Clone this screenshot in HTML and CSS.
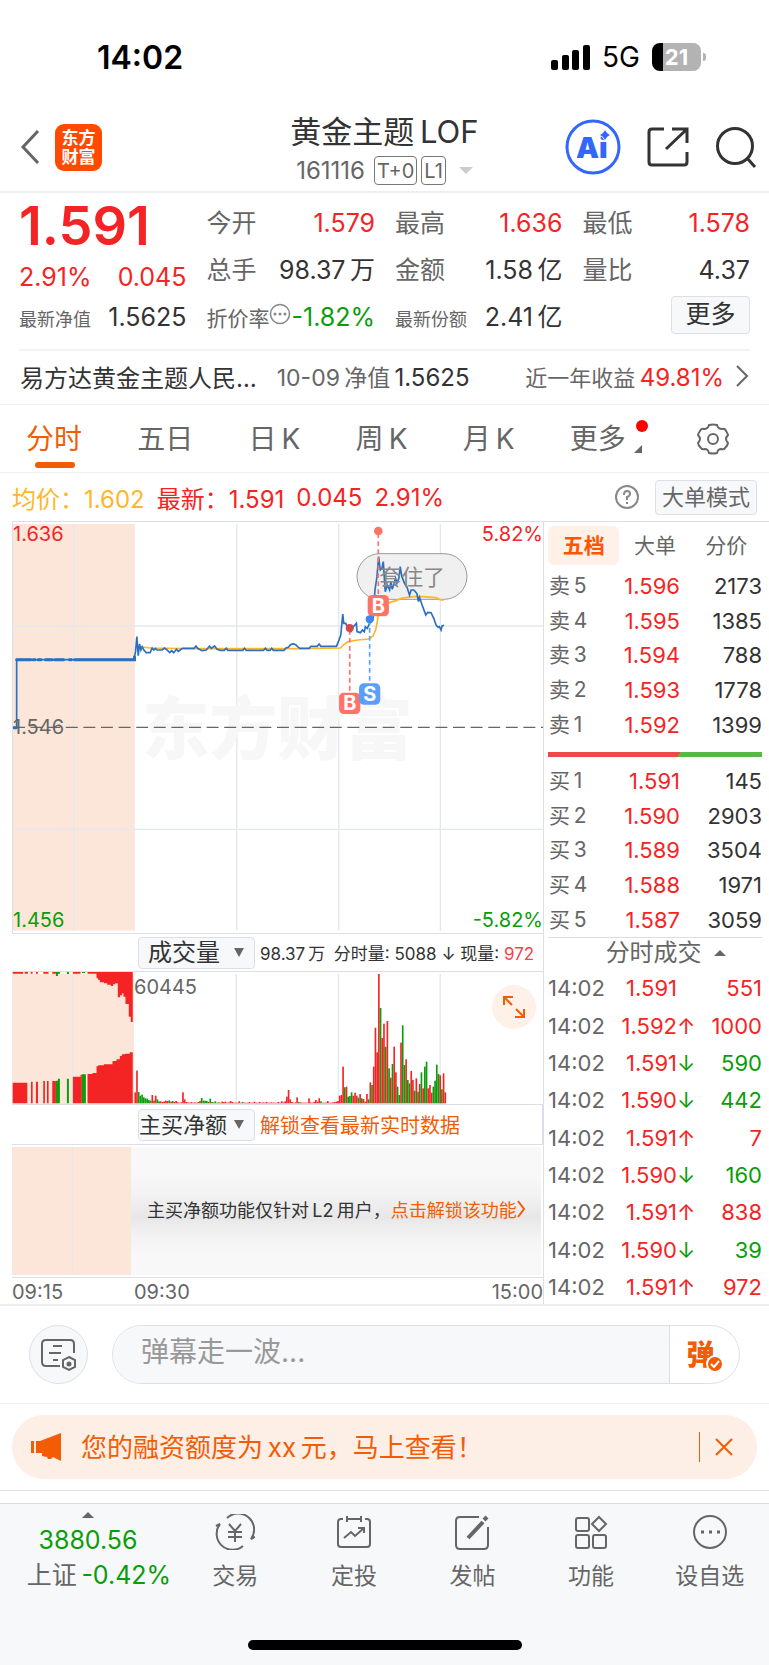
FILE: index.html
```
<!DOCTYPE html>
<html lang="zh-CN">
<head>
    <meta charset="UTF-8">
    <meta name="viewport" content="width=device-width, initial-scale=1">
    <title>黄金主题LOF 161116</title>
    <link rel="stylesheet" href="styles.css">
</head>
<body>
    <div class="status-bar">
        <span class="clock">14:02</span>
        <div class="status-right">
            <svg width="39" height="25" viewBox="0 0 39 25">
                <rect x="0" y="15" width="7" height="10" rx="2"/>
                <rect x="11" y="10" width="7" height="15" rx="2"/>
                <rect x="21" y="5" width="7" height="20" rx="2"/>
                <rect x="32" y="0" width="7" height="25" rx="2"/>
            </svg>
            <span class="network">5G</span>
            <span class="battery">21</span>
        </div>
    </div>

    <header class="header">
        <div class="header-left">
            <button class="icon-btn" aria-label="返回">
                <svg width="20" height="36" viewBox="0 0 20 36" fill="none" stroke="#666" stroke-width="3">
                    <path d="M18 2 L3 18 L18 34"/>
                </svg>
            </button>
            <a class="logo" href="#">东方<br>财富</a>
        </div>
        <div class="title">
            <h1>黄金主题&thinsp;LOF</h1>
            <div class="subtitle">
                <span>161116</span>
                <span class="tags"><span class="tag">T+0</span><span class="tag">L1</span></span>
                <span class="caret-down"></span>
            </div>
        </div>
        <div class="header-right">
            <button class="icon-btn" aria-label="AI">
                <svg width="56" height="56" viewBox="0 0 56 56">
                    <circle cx="28" cy="28" r="26" fill="#fff" stroke="#3366ff" stroke-width="3"/>
                    <text class="ai-text" x="11" y="39">Ai</text>
                    <path d="M40 9 Q41 15 47 16 Q41 17 40 23 Q39 17 33 16 Q39 15 40 9z" fill="#3366ff" stroke="#fff" stroke-width="1"/>
                </svg>
            </button>
            <button class="icon-btn" aria-label="分享">
                <svg width="42" height="42" viewBox="0 0 42 42" fill="none" stroke="#333" stroke-width="3">
                    <path d="M17 3 H5 Q2 3 2 6 V36 Q2 39 5 39 H37 Q40 39 40 36 V26"/>
                    <path d="M25 3 H40 V17 M40 3 L19 23"/>
                </svg>
            </button>
            <button class="icon-btn" aria-label="搜索">
                <svg width="42" height="42" viewBox="0 0 42 42" fill="none" stroke="#333" stroke-width="3">
                    <circle cx="20" cy="20" r="17.500"/>
                    <path d="M32 32 L40 41"/>
                </svg>
            </button>
        </div>
    </header>

    <section class="quote">
        <div class="quote-col">
            <div class="price">1.591</div>
            <div class="quote-row change red"><span>2.91%</span><span>0.045</span></div>
            <div class="quote-row"><span class="label small">最新净值</span><span>1.5625</span></div>
        </div>
        <div class="quote-col">
            <div class="quote-row"><span class="label">今开</span><span class="red">1.579</span></div>
            <div class="quote-row"><span class="label">总手</span><span>98.37&thinsp;万</span></div>
            <div class="quote-row"><span class="label medium">折价率<svg class="more-dot" width="22" height="22" viewBox="0 0 22 22" fill="#888"><circle cx="11" cy="11" r="9.500" fill="none" stroke="#888" stroke-width="1.500"/><circle cx="6" cy="11" r="1.500"/><circle cx="11" cy="11" r="1.500"/><circle cx="16" cy="11" r="1.500"/></svg></span><span class="green">-1.82%</span></div>
        </div>
        <div class="quote-col">
            <div class="quote-row"><span class="label">最高</span><span class="red">1.636</span></div>
            <div class="quote-row"><span class="label">金额</span><span>1.58&thinsp;亿</span></div>
            <div class="quote-row"><span class="label small">最新份额</span><span>2.41&thinsp;亿</span></div>
        </div>
        <div class="quote-col">
            <div class="quote-row"><span class="label">最低</span><span class="red">1.578</span></div>
            <div class="quote-row"><span class="label">量比</span><span>4.37</span></div>
            <div class="quote-row end"><button class="more-btn">更多</button></div>
        </div>
    </section>

    <a class="fund" href="#">
        <span class="fund-name">易方达黄金主题人民…</span>
        <span class="fund-nav"><span class="label">10-09&thinsp;净值</span>&thinsp;1.5625</span>
        <span class="fund-year"><span class="label">近一年收益</span>&thinsp;<span class="red">49.81%</span></span>
        <svg width="13" height="22" viewBox="0 0 13 22" fill="none" stroke="#666" stroke-width="2"><path d="M1 1 L11 11 L1 21"/></svg>
    </a>

    <nav class="tabs">
        <button class="tab active">分时</button>
        <button class="tab">五日</button>
        <button class="tab">日&thinsp;K</button>
        <button class="tab">周&thinsp;K</button>
        <button class="tab">月&thinsp;K</button>
        <button class="tab has-more">更多</button>
        <button class="tab settings" aria-label="设置">
            <svg width="32" height="32" viewBox="0 0 32 32" fill="none" stroke="#666" stroke-width="2">
                <path d="M12 2 Q16 1 20 2 Q21 6 25 6 Q28 5 29 8 Q31 11 31 12 Q27 16 31 20 Q31 22 28 25 Q27 27 24 26 Q21 26 20 30 Q16 31 12 30 Q11 26 8 26 Q5 27 4 25 Q1 22 1 20 Q5 16 1 12 Q1 11 3 8 Q4 5 7 6 Q11 6 12 2z"/>
                <circle cx="16" cy="16" r="5"/>
            </svg>
        </button>
    </nav>

    <div class="summary">
        <span class="yellow">均价：1.602</span>
        <span class="red">最新：1.591</span>
        <span class="red">0.045</span>
        <span class="red">2.91%</span>
        <div class="summary-right">
            <button class="icon-btn" aria-label="帮助">
                <svg width="26" height="26" viewBox="0 0 26 26" fill="none" stroke="#888" stroke-width="2">
                    <circle cx="13" cy="13" r="11"/>
                    <path d="M10 11 Q10 7 13 7 Q16 7 16 10 Q16 12 13 13 V16 M13 18 V20"/>
                </svg>
            </button>
            <button class="mode-btn">大单模式</button>
        </div>
    </div>

    <main class="board">
        <div class="charts">
            <div class="chart price-chart">
                <!-- 3 units per pixel -->
                <svg viewBox="36 36 1596 1233" preserveAspectRatio="none">
                    <rect x="36" y="42" width="367" height="1220" fill="#fce6da"/>
                    <path class="grid-line" d="M219 42V1262 M710 42V1262 M1017 42V1262 M1323 42V1262 M36 348H1632 M36 958H1632"/>
                    <text class="watermark" x="424" y="732">东方财富</text>
                    <rect class="bubble" x="1072" y="131" width="331" height="137" rx="69"/>
                    <path d="M36 652H1632" stroke="#666" stroke-width="4" stroke-dasharray="36 17"/>
                    <path class="line avg" d="M415 410 L450 414 L540 416 H900 L1023 414 L1030 405 L1045 395 L1075 390 L1108 387 L1120 378 L1128 360 L1132 340 L1136 315 L1145 290 L1160 280 L1190 272 L1205 265 L1240 260 L1270 260 L1310 263 L1324 270 H1334"/>
                    <path class="line auction" d="M47 449H90 M97 449H102 M112 449H120 M134 449H154 M162 449H188 M206 449H212 M222 449H402 V440 M38 653H46"/>
                    <path class="line" d="M47 655 V449 H400 L405 425 L409 380 L413 437 L417 402 L421 420 L425 410 L430 420 L437 428 H449 L455 414 L460 420 L465 415 L470 420 H485 L492 414 L500 420 L508 428 L514 422 L520 428 L528 418 L534 424 L546 415 H581 L587 408 L592 415 L605 422 L618 420 L628 408 L633 415 L643 408 L650 417 L660 421 H672 L678 415 L683 421 H728 L733 415 L738 421 H790 L796 415 L801 421 H810 L815 415 L820 421 H852 L858 414 L865 412 L872 404 L880 401 L888 405 L893 410 L900 415 H928 L933 409 H952 L958 402 L963 409 H1010 L1017 392 L1023 375 L1029 312 L1032 340 L1038 340 L1045 355 L1053 365 L1060 352 L1070 340 L1072 365 L1082 368 L1088 360 L1094 365 L1097 350 L1103 355 L1110 340 L1120 330 L1126 240 L1132 200 L1137 140 L1142 180 L1147 175 L1151 155 L1157 245 L1163 225 L1170 240 L1174 215 L1178 238 L1183 222 L1188 205 L1192 220 L1198 205 L1202 170 L1207 200 L1215 220 L1222 230 L1230 255 L1235 240 H1243 L1252 250 L1257 275 L1260 262 L1268 285 L1279 315 L1285 307 L1295 308 L1303 325 L1310 345 L1316 352 L1320 350 L1325 360 L1328 348 L1334 346"/>
                    <g class="buy">
                        <path d="M1136 70V260 M1050 360V550"/>
                        <circle cx="1136" cy="63" r="13"/>
                        <circle class="dark" cx="1050" cy="354" r="12"/>
                        <rect x="1104" y="255" width="64" height="64" rx="14"/>
                        <rect x="1018" y="548" width="64" height="64" rx="14"/>
                        <text x="1136" y="308">B</text>
                        <text x="1050" y="601">B</text>
                    </g>
                    <g class="sell">
                        <path d="M1110 330V520"/>
                        <circle cx="1110" cy="328" r="12"/>
                        <rect x="1078" y="520" width="64" height="64" rx="14"/>
                        <text x="1110" y="573">S</text>
                    </g>
                    <text class="bubble-text" x="1238" y="225">套住了</text>
                </svg>
                <span class="axis top red">1.636</span>
                <span class="axis top right red">5.82%</span>
                <span class="axis middle">1.546</span>
                <span class="axis low green">1.456</span>
                <span class="axis low right green">-5.82%</span>
            </div>

            <div class="indicator">
                <span class="select"><select aria-label="指标"><option>成交量</option></select></span>
                <span class="indicator-text">98.37&thinsp;万&ensp;分时量: 5088 ↓ 现量: <span class="bright">972</span></span>
            </div>
            <div class="chart volume-chart">
                <svg id="volume" viewBox="36 126 1596 396" preserveAspectRatio="none">
                    <rect x="36" y="132" width="367" height="390" fill="#fce6da"/>
                    <path class="grid-line" d="M219 132V522 M710 132V522 M1017 132V522 M1323 132V522"/>
                    <path fill="#f52424" d="M38 126H70V131H38z M74 126H84V131H74z M92 126H98V131H92z M108 126H114V131H108z M130 126H146V131H130z M157 126H168V131H157z M219 126H242V131H219z M263 126H290V131H263z M290 126V145H295V150H300V157H312V160H322V164H333V168H340V163H346V160H354V202H361V196H367V190H371V200H377V222H387V260H393V276H399V126z"/>
                    <path fill="#f52424" d="M38 520V458H82V520z M93 520V455H98V520z M108 520V455H114V520z M130 520V453H135V520z M141 520V453H146V520z M157 520V453H168V520z M219 520V440H242V434H246V520z M263 520V432H278V429H290V409H295V406H312V403H338V393H350V388H360V378H366V373H376V371H390V367H399V520z"/>
                    <path fill="#0a9d0a" d="M168 520V452H174V446H180V520z M201 520V446H207V520z M246 520V433H258V520z M168 126H180V131H174V138H168z M201 126H207V132H201z M246 126H256V129H246z"/>
                </svg>
                <span class="axis volume-max">60445</span>
                <button class="expand" aria-label="全屏">
                    <svg width="24" height="24" viewBox="0 0 24 24" fill="none" stroke="#f25c05" stroke-width="2">
                        <path d="M2 10V2H11 M3 3L10 10 M22 14V22H13 M21 21L14 14"/>
                    </svg>
                </button>
            </div>

            <div class="indicator boxed">
                <span class="select wide"><select aria-label="资金指标"><option>主买净额</option></select></span>
                <a class="unlock" href="#">解锁查看最新实时数据</a>
            </div>
            <div class="chart locked">
                <div class="auction-area"></div>
                <div class="locked-msg">主买净额功能仅针对&thinsp;L2&thinsp;用户，<a href="#">点击解锁该功能<svg width="9" height="18" viewBox="0 0 9 18" fill="none" stroke="#f25c05" stroke-width="2"><path d="M1 1 L7 9 L1 17"/></svg></a></div>
            </div>
            <div class="times">
                <span class="first">09:15</span>
                <span>09:30</span>
                <span class="last">15:00</span>
            </div>
        </div>

        <aside class="side">
            <div class="side-tabs">
                <button class="active">五档</button>
                <button>大单</button>
                <button>分价</button>
            </div>
            <table class="levels">
                <tr><th>卖&thinsp;5</th><td class="red">1.596</td><td>2173</td></tr>
                <tr><th>卖&thinsp;4</th><td class="red">1.595</td><td>1385</td></tr>
                <tr><th>卖&thinsp;3</th><td class="red">1.594</td><td>788</td></tr>
                <tr><th>卖&thinsp;2</th><td class="red">1.593</td><td>1778</td></tr>
                <tr><th>卖&thinsp;1</th><td class="red">1.592</td><td>1399</td></tr>
            </table>
            <div class="ratio"></div>
            <table class="levels">
                <tr><th>买&thinsp;1</th><td class="red">1.591</td><td>145</td></tr>
                <tr><th>买&thinsp;2</th><td class="red">1.590</td><td>2903</td></tr>
                <tr><th>买&thinsp;3</th><td class="red">1.589</td><td>3504</td></tr>
                <tr><th>买&thinsp;4</th><td class="red">1.588</td><td>1971</td></tr>
                <tr><th>买&thinsp;5</th><td class="red">1.587</td><td>3059</td></tr>
            </table>
            <button class="deals-title">分时成交 <span class="caret-up"></span></button>
            <table class="deals">
                <tr><th>14:02</th><td>1.591</td><td class="arrow"></td><td class="red">551</td></tr>
                <tr><th>14:02</th><td>1.592</td><td class="arrow red">↑</td><td class="red">1000</td></tr>
                <tr><th>14:02</th><td>1.591</td><td class="arrow green">↓</td><td class="green">590</td></tr>
                <tr><th>14:02</th><td>1.590</td><td class="arrow green">↓</td><td class="green">442</td></tr>
                <tr><th>14:02</th><td>1.591</td><td class="arrow red">↑</td><td class="red">7</td></tr>
                <tr><th>14:02</th><td>1.590</td><td class="arrow green">↓</td><td class="green">160</td></tr>
                <tr><th>14:02</th><td>1.591</td><td class="arrow red">↑</td><td class="red">838</td></tr>
                <tr><th>14:02</th><td>1.590</td><td class="arrow green">↓</td><td class="green">39</td></tr>
                <tr><th>14:02</th><td>1.591</td><td class="arrow red">↑</td><td class="red">972</td></tr>
            </table>
        </aside>
    </main>

    <form class="comment">
        <button type="button" class="comment-set" aria-label="弹幕设置">
            <svg width="36" height="34" viewBox="0 0 36 34" fill="none" stroke="#666" stroke-width="2">
                <path d="M33 15V6Q33 2 29 2H5Q1 2 1 6V24Q1 28 5 28H19 M12 8H21 M8 15H20 M12 22H17"/>
                <path d="M28 19L34 22V29L28 32L22 29V22z"/>
                <circle cx="28" cy="26" r="1.500" fill="#666"/>
            </svg>
        </button>
        <div class="comment-box">
            <input type="text" aria-label="弹幕" placeholder="弹幕走一波...">
            <button type="button" class="danmu" aria-label="弹幕开关">弹<svg width="18" height="18" viewBox="0 0 18 18"><circle cx="9" cy="9" r="8" fill="#f25c05" stroke="#fff" stroke-width="2"/><path d="M5 9L8 12L13 6" fill="none" stroke="#fff" stroke-width="2"/></svg></button>
        </div>
    </form>

    <div class="banner-wrap">
        <div class="banner">
            <svg width="30" height="28" viewBox="0 0 30 28" fill="#f25c05">
                <path d="M0 8H3V20H0z M5 8H9L30 0V28L22 24L20 26H17L16 24L11 23V20H5z"/>
            </svg>
            <span class="banner-text">您的融资额度为&thinsp;xx&thinsp;元，马上查看！</span>
            <button class="banner-close" aria-label="关闭">
                <svg width="18" height="18" viewBox="0 0 18 18" stroke="#f25c05" stroke-width="2"><path d="M1 1L17 17 M17 1L1 17"/></svg>
            </button>
        </div>
    </div>

    <footer class="footer">
        <div class="bottom-nav">
            <a class="index" href="#">
                <span class="caret-up"></span>
                <span class="green">3880.56</span>
                <span class="index-name">上证&thinsp;<span class="green">-0.42%</span></span>
            </a>
            <a class="nav-item" href="#">
                <svg width="40" height="36" viewBox="0 0 40 36">
                    <path d="M12 4A16 16 0 0 1 36 25L40 23 M28 32A16 16 0 0 1 5 10L1 12"/>
                    <path d="M14 10L20 17L26 10 M20 17V28 M13 18H27 M13 23H27"/>
                </svg>
                交易
            </a>
            <a class="nav-item" href="#">
                <svg width="34" height="36" viewBox="0 0 34 36">
                    <path d="M6 5H4Q1 5 1 8V30Q1 33 4 33H30Q33 33 33 30V8Q33 5 30 5H28 M10 2V8 M24 2V8 M10 5H24"/>
                    <path d="M7 24L14 18L18 22L27 14 M21 14H27V19"/>
                </svg>
                定投
            </a>
            <a class="nav-item" href="#">
                <svg width="34" height="36" viewBox="0 0 34 36">
                    <path d="M24 3H5Q1 3 1 7V31Q1 35 5 35H29Q33 35 33 31V13"/>
                    <path d="M13 24L28 8" stroke-width="4"/><path d="M29 6L32 3" stroke-width="4"/>
                </svg>
                发帖
            </a>
            <a class="nav-item" href="#">
                <svg width="34" height="36" viewBox="0 0 34 36">
                    <rect x="2" y="4" width="13" height="13" rx="2"/>
                    <rect x="2" y="21" width="13" height="13" rx="2"/>
                    <rect x="19" y="21" width="13" height="13" rx="2"/>
                    <path d="M25 3L32 10L25 17L18 10z"/>
                </svg>
                功能
            </a>
            <a class="nav-item" href="#">
                <svg width="34" height="36" viewBox="0 0 34 36">
                    <circle cx="17" cy="18" r="16"/>
                    <path d="M8 18H11 M16 18H19 M24 18H27" stroke-width="3"/>
                </svg>
                设自选
            </a>
        </div>
        <div class="home-bar"></div>
    </footer>
    <script src="script.js"></script>
</body>
</html>
```
FILE: styles.css
```
* { box-sizing: border-box; }
body {
    margin: 0;
    background: #fff;
    color: #333;
    font-family: Inter, "Noto Sans CJK SC", sans-serif;
    font-size: 25px;
}
button, input, select {
    font: inherit;
    color: inherit;
    background: none;
    border: none;
    margin: 0;
    padding: 0;
}
button { cursor: pointer; }
a { color: inherit; text-decoration: none; }
svg { display: block; }

.red { color: #f52424; }
.green { color: #0a9d0a; }
.yellow { color: #fcb72b; }
.label { color: #666; }

/* status bar */
.status-bar {
    display: flex;
    justify-content: space-between;
    align-items: center;
    height: 114px;
    padding: 0 68px 0 97px;
    color: #000;
}
.clock { font-size: 32px; font-weight: 600; }
.status-right { display: flex; align-items: center; gap: 12px; }
.network { font-size: 28px; }
.battery {
    position: relative;
    width: 49px;
    height: 28px;
    border-radius: 8px;
    background: linear-gradient(90deg, #000 11px, #b3b3b3 11px);
    color: #fff;
    font-size: 22px;
    font-weight: 700;
    line-height: 28px;
    text-align: center;
}
.battery::after {
    content: "";
    position: absolute;
    left: 51px;
    top: 10px;
    width: 3px;
    height: 8px;
    border-radius: 0 3px 3px 0;
    background: #b3b3b3;
}

/* header */
.header {
    display: grid;
    grid-template-columns: 1fr auto 1fr;
    align-items: center;
    height: 79px;
    padding: 0 12px 2px 20px;
    border-bottom: 2px solid #eee;
}
.header-left { display: flex; align-items: center; gap: 15px; padding-bottom: 10px; }
.logo {
    width: 47px;
    height: 47px;
    padding-top: 5px;
    border-radius: 9px;
    background: #ff4a00;
    color: #fff;
    font-size: 17px;
    font-weight: 700;
    line-height: 19px;
    text-align: center;
}
.title { padding-right: 8px; text-align: center; }
.title h1 { margin: 0; font-size: 31px; font-weight: 400; line-height: 36px; }
.subtitle {
    display: flex;
    align-items: center;
    justify-content: center;
    gap: 9px;
    height: 40px;
    color: #666;
    font-size: 24px;
}
.tags { display: flex; gap: 4px; }
.tag {
    height: 29px;
    padding: 0 2px;
    border: 1px solid #777;
    border-radius: 4px;
    font-size: 20px;
    line-height: 28px;
}
.caret-down {
    margin-left: 4px;
    border: 7px solid transparent;
    border-top-color: #ccc;
    border-bottom: none;
}
.caret-up {
    display: inline-block;
    border: 6px solid transparent;
    border-bottom-color: #666;
    border-top: none;
}
.header-right {
    display: flex;
    align-items: center;
    justify-content: flex-end;
    gap: 26px;
    padding-bottom: 10px;
}
.ai-text { font-size: 29px; font-weight: 900; fill: #3366ff; }

/* quote */
.quote {
    display: grid;
    grid-template-columns: repeat(4, 1fr);
    gap: 20px;
    margin: 0 19px;
    padding: 7px 0 8px;
    border-bottom: 2px solid #f3f3f3;
}
.quote-row {
    display: flex;
    justify-content: space-between;
    align-items: baseline;
    height: 47px;
    line-height: 47px;
    white-space: nowrap;
}
.quote-row.change { height: 39px; line-height: 45px; }
.quote-row.end { justify-content: flex-end; align-items: flex-start; padding-top: 2px; }
.quote .label { font-size: 25px; }
.quote .label.medium { display: flex; font-size: 21px; }
.quote .label.small { font-size: 18px; }
.more-dot { margin-top: 8px; }
.price {
    height: 55px;
    color: #f52424;
    font-size: 54px;
    font-weight: 600;
    line-height: 51px;
}
.more-btn {
    width: 79px;
    height: 38px;
    padding-bottom: 2px;
    border: 1px solid #dcdfe6;
    border-radius: 4px;
    background: #f7f8fa;
    font-size: 25px;
    line-height: 32px;
}

/* fund */
.fund {
    display: flex;
    align-items: center;
    height: 54px;
    padding: 0 20px 3px;
    border-bottom: 1px solid #eee;
    font-size: 24px;
    white-space: nowrap;
}
.fund .label { font-size: 22px; }
.fund-nav { margin-left: 20px; }
.fund-nav .label { font-size: 23px; }
.fund-year { margin-left: auto; margin-right: 12px; }

/* period tabs */
.tabs {
    display: flex;
    justify-content: space-between;
    align-items: center;
    height: 68px;
    padding: 0 40px 0 26px;
    border-bottom: 1px solid #eee;
    font-size: 28px;
    color: #666;
}
.tab { position: relative; height: 66px; padding-bottom: 4px; }
.tab.settings { padding-bottom: 0; }
.tab.active { color: #f25c05; }
.tab.active::after {
    content: "";
    position: absolute;
    left: 9px;
    bottom: 4px;
    width: 40px;
    height: 6px;
    border-radius: 3px;
    background: #f25c05;
}
.tab.has-more { margin-right: 16px; }
.has-more::before {
    content: "";
    position: absolute;
    right: -22px;
    top: 14px;
    width: 12px;
    height: 12px;
    border-radius: 50%;
    background: #f00;
}
.has-more::after {
    content: "";
    position: absolute;
    right: -16px;
    bottom: 19px;
    border-bottom: 8px solid #666;
    border-left: 8px solid transparent;
}

/* summary line */
.summary {
    display: flex;
    align-items: center;
    gap: 12px;
    height: 48px;
    padding: 0 12px;
    font-size: 24px;
    white-space: nowrap;
}
.summary-right { display: flex; align-items: center; gap: 15px; margin-left: auto; }
.mode-btn {
    width: 102px;
    height: 35px;
    border: 1px solid #dcdfe6;
    border-radius: 4px;
    background: #f7f8fa;
    color: #666;
    font-size: 22px;
    line-height: 30px;
}

/* charts */
.board { display: flex; border-bottom: 2px solid #eee; }
.charts { flex: 1; min-width: 0; padding-left: 12px; border-right: 1px solid #dcdfe6; }
.chart { position: relative; }
.chart > svg { width: 100%; height: 100%; }
.price-chart {
    height: 413px;
    border: 1px solid #dcdfe6;
    border-right: none;
}
.grid-line { fill: none; stroke: #e3e7ee; stroke-width: 4; }
.watermark { font-size: 204px; font-weight: 900; fill: #f7f7f7; }
.line { fill: none; stroke: #2b70c0; stroke-width: 5; }
.line.avg { stroke: #fcb72b; }
.line.auction { stroke-width: 9; stroke-linecap: round; }
.buy path { stroke: #ff7366; stroke-width: 5; stroke-dasharray: 14 10; }
.buy rect, .buy circle { fill: #ff7366; }
.buy .dark { fill: #d9444c; }
.sell path { stroke: #5a9fff; stroke-width: 5; stroke-dasharray: 14 10; }
.sell rect { fill: #5a9fff; }
.sell circle { fill: #3d86f5; }
.buy text, .sell text { fill: #fff; font-size: 60px; font-weight: 700; text-anchor: middle; }
.bubble { fill: #f0f0f0; stroke: #999; stroke-width: 3; }
.bubble-text { fill: #888; font-size: 66px; text-anchor: middle; }
.axis {
    position: absolute;
    left: 0;
    color: #666;
    font-size: 20px;
    line-height: 24px;
}
.axis.red { color: #f52424; }
.axis.green { color: #0a9d0a; }
.axis.right { left: auto; right: 0; }
.axis.top { top: 0; }
.axis.middle { top: 193px; }
.axis.low { bottom: 1px; }

.indicator {
    display: flex;
    align-items: center;
    gap: 5px;
    height: 37px;
    padding-left: 126px;
    white-space: nowrap;
}
.indicator.boxed {
    height: 40px;
    border-top: 1px solid #dcdfe6;
    border-right: 1px solid #dcdfe6;
}
.select { position: relative; flex: none; width: 117px; height: 32px; }
.select select {
    appearance: none;
    width: 117px;
    height: 32px;
    padding-left: 9px;
    border: 1px solid #dcdfe6;
    border-radius: 4px;
    background: #f7f8fa;
    font-size: 24px;
}
.select.wide select { padding-left: 0; font-size: 22px; }
.select::after {
    content: "";
    position: absolute;
    right: 11px;
    top: 11px;
    border: 5px solid transparent;
    border-top: 9px solid #666;
    border-bottom: none;
}
.indicator-text { font-size: 17px; }
.bright { color: #f54545; }
.volume-chart { height: 133px; border-top: 1px solid #dcdfe6; }
.axis.volume-max { left: 122px; top: 3px; }
.expand {
    position: absolute;
    right: 7px;
    top: 13px;
    display: flex;
    align-items: center;
    justify-content: center;
    width: 44px;
    height: 44px;
    border-radius: 50%;
    background: #fff0e8;
}
.unlock { color: #f25c05; font-size: 20px; }
.locked {
    display: flex;
    height: 134px;
    padding: 2px 2px 2px 0;
    border-top: 1px solid #dcdfe6;
    border-bottom: 1px solid #dcdfe6;
}
.auction-area {
    width: 119px;
    background: linear-gradient(90deg, #fce6da 60px, #e3e7ee 60px, #e3e7ee 61px, #fce6da 61px);
}
.locked-msg {
    flex: 1;
    display: flex;
    align-items: center;
    padding: 0 0 4px 16px;
    background: linear-gradient(#f8f8f8 20%, #f2f2f2 38%, #e7e7e7 55%, #f3f3f3 70%, #f8f8f8 85%);
    font-size: 18px;
    white-space: nowrap;
}
.locked-msg a { display: flex; align-items: center; color: #f25c05; }
.times { display: flex; height: 26px; color: #666; font-size: 20px; line-height: 28px; }
.times .first { width: 122px; }
.times .last { margin-left: auto; }

/* order book */
.side { width: 225px; padding: 0 7px 0 4px; border-top: 1px solid #dcdfe6; }
.side-tabs { display: flex; padding-top: 4px; font-size: 21px; color: #666; }
.side-tabs button { flex: 1; height: 39px; padding-bottom: 4px; }
.side-tabs .active {
    border-radius: 6px;
    background: #fff0e8;
    color: #ff5500;
    font-weight: 700;
}
table { width: 100%; border-collapse: collapse; font-size: 22px; }
th, td { padding: 0; text-align: right; line-height: 30px; }
th { color: #666; font-weight: 400; text-align: left; }
.levels { height: 173px; margin-top: 4px; }
.levels th { padding-left: 1px; width: 60px; font-size: 21px; }
.levels td { width: 72px; }
.levels td:last-child { width: auto; }
.ratio {
    height: 5px;
    margin: 10px 0 7px;
    background: linear-gradient(120deg, #f04848 61%, #57b944 61%);
}
.deals-title {
    display: block;
    width: 100%;
    height: 29px;
    padding-left: 22px;
    border-top: 1px solid #dcdfe6;
    color: #666;
    font-size: 24px;
    line-height: 29px;
}
.deals-title .caret-up { margin: 0 0 5px 6px; }
.deals { height: 336px; }
.deals th, .deals td { vertical-align: bottom; }
.deals th { width: 60px; }
.deals td { width: 69px; color: #f52424; }
.deals .arrow { width: 14px; }
.deals td:last-child { width: auto; }
.deals .green { color: #0a9d0a; }

/* comment */
.comment {
    display: flex;
    gap: 24px;
    padding: 19px 29px 19px;
    border-bottom: 1px solid #eee;
}
.comment-set {
    display: flex;
    align-items: center;
    justify-content: center;
    width: 59px;
    height: 59px;
    border: 1px solid #dcdfe6;
    border-radius: 50%;
    background: #f7f8fa;
}
.comment-box {
    flex: 1;
    display: flex;
    height: 59px;
    border: 1px solid #dcdfe6;
    border-radius: 30px;
    overflow: hidden;
}
.comment-box input {
    flex: 1;
    min-width: 0;
    padding: 0 28px 5px;
    background: #f7f8fa;
    font-size: 28px;
}
.comment-box input::placeholder { color: #999; }
.danmu {
    position: relative;
    width: 70px;
    padding: 0 8px 4px 0;
    border-left: 1px solid #dcdfe6;
    color: #f25c05;
    font-size: 28px;
    font-weight: 900;
}
.danmu svg { position: absolute; right: 15px; bottom: 10px; }

/* banner */
.banner-wrap { padding: 11px 12px 11px; border-bottom: 1px solid #dcdfe6; }
.banner {
    display: flex;
    align-items: center;
    height: 64px;
    padding: 0 24px 0 19px;
    border-radius: 32px;
    background: #fdeee6;
    color: #f25c05;
}
.banner-text { margin-left: 20px; padding-bottom: 3px; font-size: 26px; }
.banner-close {
    margin-left: auto;
    padding: 6px 0 6px 15px;
    border-left: 1px solid #f25c05;
}

/* bottom navigation */
.footer {
    margin-top: 12px;
    height: 162px;
    border-top: 1px solid #dcdfe6;
    background: #f7f8fa;
    color: #666;
}
.bottom-nav { display: flex; height: 136px; }
.index {
    display: flex;
    flex-direction: column;
    align-items: center;
    width: 176px;
    padding-top: 8px;
    line-height: 34px;
}
.index .caret-up { margin-bottom: 5px; }
.index-name { line-height: 36px; margin-left: 22px; }
.nav-item {
    flex: 1;
    display: flex;
    flex-direction: column;
    align-items: center;
    gap: 10px;
    padding-top: 10px;
    font-size: 23px;
    line-height: 32px;
}
.nav-item svg { fill: none; stroke: #666; stroke-width: 2; }
.home-bar {
    width: 274px;
    height: 10px;
    margin: 0 auto;
    border-radius: 5px;
    background: #000;
}
```
FILE: script.js
```
// one bar per minute from 09:30: r = up, g = down, then the bar height
const bars =
    'r33 r98 g34 g23 g26 g18 g15 g14 g10 g8 r25 r8 r23 g12 g6 r6 r4 r6 r8 r7 g9 r5 g7 r4 r7 r3 r2 r3 r33 r12 ' +
    'r4 r3 r2 r4 r2 r3 g2 r4 r7 g16 g8 g8 g7 r4 g14 g4 r3 g6 r2 g3 r2 r5 r4 r5 r2 r3 r7 r4 r2 r2 ' +
    'r2 r6 r2 g4 r2 r2 r2 r4 r2 r2 r5 r2 r2 r4 r2 r3 r2 r4 r2 r2 r3 r2 r2 r2 r4 r2 r6 r3 r6 r20 ' +
    'r40 r12 r4 r2 r3 r18 g4 r3 r2 r2 r2 r2 r15 r3 r2 r4 r10 r5 r15 g6 r2 r2 r2 r7 r2 r2 r3 r4 r5 ' +
    'r7 r23 r25 r110 g48 r50 g20 g22 g33 r23 r32 r23 g17 r28 g15 r13 r5 r28 g12 r63 g55 r110 r227 r153 r388 ' +
    'g286 r196 r239 g170 r247 g105 r77 g118 r170 r93 g50 g25 r182 g234 g115 r132 g70 g60 r97 r70 g38 ' +
    'r75 g35 r58 g93 r45 g110 g125 r45 r55 r32 g50 g68 g116 g88 r84 g42 r90 r33';

const svg = document.getElementById('volume');

bars.split(' ').forEach((bar, i) => {
    const height = Number(bar.slice(1));
    const rect = document.createElementNS('http://www.w3.org/2000/svg', 'rect');
    rect.setAttribute('x', 404 + i * 5.12);
    rect.setAttribute('y', 520 - height);
    rect.setAttribute('width', 5);
    rect.setAttribute('height', height);
    rect.setAttribute('fill', bar[0] === 'r' ? '#f52424' : '#0a9d0a');
    svg.appendChild(rect);
});
```
